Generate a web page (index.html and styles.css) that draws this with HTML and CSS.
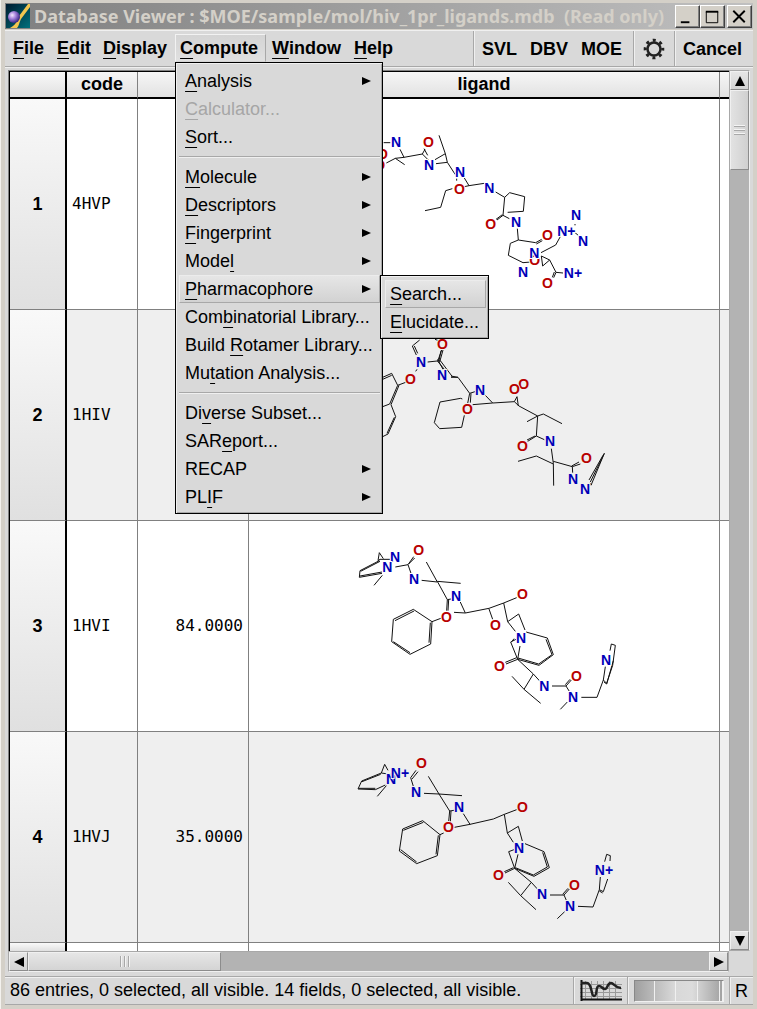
FILE: index.html
```html
<!DOCTYPE html>
<html lang="en">
<head>
<meta charset="utf-8">
<title>Database Viewer</title>
<link rel="stylesheet" href="styles.css">
</head>
<body>
<div class="window">
  <header class="titlebar">
    <svg class="logo" viewBox="0 0 24 24" aria-hidden="true">
      <defs>
        <linearGradient id="sky" x1="0" y1="0" x2="1" y2="1"><stop offset="0" stop-color="#001c30"/><stop offset="1" stop-color="#00707c"/></linearGradient>
        <radialGradient id="ball" cx=".35" cy=".35" r=".65"><stop offset="0" stop-color="#f4e8ff"/><stop offset=".45" stop-color="#a684dc"/><stop offset="1" stop-color="#3c2a88"/></radialGradient>
      </defs>
      <rect width="24" height="24" fill="url(#sky)"/>
      <path d="M4 24C10 21 11 17 13 12L22 0H24V3L15 15C13 19 13 22 11 24Z" fill="#f3c64f"/>
      <circle cx="8" cy="13" r="6" fill="url(#ball)"/>
    </svg>
    <h1 class="title">Database Viewer : $MOE/sample/mol/hiv_1pr_ligands.mdb&nbsp; (Read only)</h1>
    <div class="winbuttons">
      <button class="winbtn" aria-label="Minimize"><svg viewBox="0 0 24 22"><path d="M5 17H14" stroke-width="2"/></svg></button>
      <button class="winbtn" aria-label="Maximize"><svg viewBox="0 0 24 22"><path d="M5 6H18" stroke-width="2"/><path d="M5.500 6V17.500H17.500V6"/></svg></button>
      <button class="winbtn close" aria-label="Close"><svg viewBox="0 0 24 22"><path d="M5.500 5L17.500 17M17.500 5L5.500 17" stroke-width="2"/></svg></button>
    </div>
  </header>

  <nav class="menubar">
    <div class="menus">
      <button class="menu"><u>F</u>ile</button>
      <button class="menu"><u>E</u>dit</button>
      <button class="menu"><u>D</u>isplay</button>
      <div class="menuhost">
        <button class="menu open" aria-expanded="true"><u>C</u>ompute</button>
        <div class="dropdown">
          <button class="item sub"><span><u>A</u>nalysis</span></button>
          <button class="item" disabled><span><u>C</u>alculator...</span></button>
          <button class="item"><span><u>S</u>ort...</span></button>
          <hr class="sep">
          <button class="item sub"><span><u>M</u>olecule</span></button>
          <button class="item sub"><span><u>D</u>escriptors</span></button>
          <button class="item sub"><span><u>F</u>ingerprint</span></button>
          <button class="item sub"><span>Mode<u>l</u></span></button>
          <div class="itemhost">
            <button class="item sub active"><span><u>P</u>harmacophore</span></button>
            <div class="dropdown submenu">
              <button class="item active"><span><u>S</u>earch...</span></button>
              <button class="item"><span><u>E</u>lucidate...</span></button>
            </div>
          </div>
          <button class="item"><span>Com<u>b</u>inatorial Library...</span></button>
          <button class="item"><span>Build <u>R</u>otamer Library...</span></button>
          <button class="item"><span>Mu<u>t</u>ation Analysis...</span></button>
          <hr class="sep">
          <button class="item"><span>Di<u>v</u>erse Subset...</span></button>
          <button class="item"><span>SAR<u>e</u>port...</span></button>
          <button class="item sub"><span>RECAP</span></button>
          <button class="item sub"><span>PL<u>I</u>F</span></button>
        </div>
      </div>
      <button class="menu"><u>W</u>indow</button>
      <button class="menu"><u>H</u>elp</button>
    </div>
    <div class="tools">
      <button class="menu">SVL</button>
      <button class="menu">DBV</button>
      <button class="menu">MOE</button>
    </div>
    <div class="tools gear">
      <button class="menu" aria-label="Settings"><svg width="22" height="22" viewBox="-11 -11 22 22" fill="none" stroke="#222"><circle r="6.500" stroke-width="2.500"/><circle r="8.800" stroke-width="3" stroke-dasharray="3 3.910" stroke-dashoffset="1.500"/></svg></button>
    </div>
    <div class="tools cancel"><button class="menu">Cancel</button></div>
  </nav>

  <main class="viewer">
    <div class="gridbox">
      <table class="grid">
        <colgroup><col class="c-num"><col class="c-code"><col class="c-val"><col class="c-lig"><col class="c-end"></colgroup>
        <thead><tr><th></th><th>code</th><th></th><th>ligand</th><th></th></tr></thead>
        <tbody>
          <tr><th>1</th><td>4HVP</td><td></td><td class="mol">
            <svg viewBox="-378 -33 1410 630">
              <path d="M0 88L16 94M0 101L16 97M26 98H46M75 118L87 142L142 132L150 118M142 132L160 150M147 116L158 136M34 159L61 145L89 164M61 145L87 142M192 76L211 131L180 149M211 131L217 157L183 161M217 157L241 194M245 206V212M268 204L282 227L328 220M282 227L268 230M232 236L212 242L197 292L150 302M362 246L389 262L404 248L449 260L445 304L398 307M389 262L384 316L366 330M382 314L363 328M384 316L403 326M427 356L430 390L482 398L500 388M484 402L502 392M430 390L406 400L400 436L444 458L468 456M498 428L542 405L557 378M598 366L613 379M600 342V346M499 438L524 450L503 468L499 438M524 450L543 487L536 503M538 486L532 502M543 487L564 489"/>
              <g class="o"><text x="22" y="146">O</text><text x="14" y="181">O</text><text x="160" y="111">O</text><text x="253" y="252">O</text><text x="347" y="357">O</text><text x="517" y="390">O</text><text x="479" y="464">O</text><text x="517" y="534">O</text></g>
              <g class="n"><text x="63" y="111">N</text><text x="162" y="180">N</text><text x="255" y="200">N</text><text x="343" y="249">N</text><text x="423" y="352">N</text><text x="603" y="330">N</text><text x="574" y="377">N+</text><text x="624" y="407">N</text><text x="478" y="444">N</text><text x="444" y="501">N</text><text x="594" y="503">N+</text></g>
            </svg></td><td></td></tr>
          <tr><th>2</th><td>1HIV</td><td></td><td class="mol">
            <svg viewBox="-378 -60 1410 630">
              <path d="M134 30L112 48L124 75M118 48L128 70M180 28L196 34M200 60L188 94L208 118M204 60L194 96M198 62L192 92M158 96L196 92L232 140M188 88L204 118M228 138L249 142L284 190L278 220M288 190L286 218M228 142L249 142M284 190L300 185M122 124L126 118M92 157L68 166L50 130L23 142M50 136L23 148M68 166L44 222L23 230M72 166L48 224L62 260L39 312L23 320M58 262L36 310M331 196L353 219L293 224M353 219L418 215L432 228L488 258L456 275M488 258L505 252L561 281M418 215L426 200L430 228M262 207L257 205L195 216L178 278L194 296L260 292L268 256M488 258L484 318L458 334M480 318L456 330M484 318L508 329M529 356L535 400L536 467M429 394L484 378L535 402M535 394L592 410L616 402M590 408L612 396M592 410L593 428M648 466L688 370L646 456M642 450L684 376M644 460L650 464"/>
              <g class="o"><text x="202" y="57">O</text><text x="106" y="162">O</text><text x="277" y="252">O</text><text x="446" y="177">O</text><text x="418" y="192">O</text><text x="442" y="363">O</text><text x="634" y="399">O</text></g>
              <g class="n"><text x="138" y="112">N</text><text x="201" y="150">N</text><text x="315" y="195">N</text><text x="525" y="348">N</text><text x="594" y="462">N</text><text x="630" y="492">N</text></g>
            </svg></td><td></td></tr>
          <tr><th>3</th><td>1HVI</td><td>84.0000</td><td class="mol">
            <svg viewBox="-273 -27 1410 630">
              <path d="M150 88H120L114 92L118 68L130 86M118 92L60 122L58 142L126 130M120 94L62 124M60 138L126 126M127 136L102 166M166 111L204 104L221 80M206 102L224 84M204 104L213 130M245 151L292 156L259 96M292 154L362 160M292 154L322 209L320 242M326 209L324 242M322 209L333 207M359 212L376 249L342 247M376 249L447 235L491 219L530 203M447 237L458 268M491 219L503 275L526 304M503 275L536 252L555 300M558 306L622 324L640 374L597 406L533 388M618 328L636 374L596 402L534 384M528 328L512 336L533 388L540 348M522 326L516 334M533 388L498 402M530 383L496 397M533 388L580 432L600 454M580 432L552 478L516 439M552 478L602 520M636 468H678L694 450M676 464L690 448M678 468L688 484M682 516L661 538M724 502H771L790 450L796 410M790 450L800 460L818 406L826 346L814 342L810 362M792 456L800 462L820 392M305 264L276 275L220 238L160 268L155 335L210 373L272 342L276 275M222 243L165 272M160 335L210 368M267 338L271 278"/>
              <g class="o"><text x="236" y="75">O</text><text x="319" y="277">O</text><text x="547" y="208">O</text><text x="466" y="300">O</text><text x="478" y="424">O</text><text x="709" y="453">O</text></g>
              <g class="n"><text x="165" y="96">N</text><text x="142" y="126">N</text><text x="222" y="162">N</text><text x="348" y="213">N</text><text x="543" y="340">N</text><text x="613" y="483">N</text><text x="699" y="516">N</text><text x="798" y="405">N</text></g>
            </svg></td><td></td></tr>
          <tr><th>4</th><td>1HVJ</td><td>35.0000</td><td class="mol">
            <svg viewBox="-273 -39 1410 630">
              <path d="M152 88L124 84L134 58L144 76M124 84L65 108L54 132L106 134L136 120M122 88L66 110M56 130L106 130M139 122L112 154M212 98L228 76M216 102L234 80M212 98L220 124M252 145L297 147L265 94M297 147L366 152M297 147L329 198L326 230M333 198L331 230M329 198L342 196M370 206L390 238L343 247M390 238L460 222L493 208L530 194M493 208L502 264L520 292M502 264L535 244L547 288M555 296L612 320L628 368L582 394L524 370M608 322L622 366L580 390L526 368M522 314L506 320L524 370L534 328M524 370L495 384M520 368L493 380M524 370L574 412L594 434M574 412L542 452L505 412M542 452L588 494M630 450H672L688 432M668 448L684 430M672 450L680 468M674 500L652 521M714 484L759 486L778 434L781 396M778 434L790 440L803 402M778 438L788 444M794 350L800 328L811 332L810 348M311 264L300 269L248 227L188 252L178 318L230 356L292 332L300 269M250 232L190 256M182 314L230 351M288 328L295 271"/>
              <g class="o"><text x="244" y="69">O</text><text x="325" y="261">O</text><text x="547" y="201">O</text><text x="475" y="405">O</text><text x="703" y="435">O</text></g>
              <g class="n"><text x="153" y="117">N</text><text x="180" y="99">N+</text><text x="228" y="157">N</text><text x="357" y="201">N</text><text x="537" y="325">N</text><text x="606" y="463">N</text><text x="690" y="498">N</text><text x="792" y="390">N+</text></g>
            </svg></td><td></td></tr>
          <tr class="partial"><th></th><td></td><td></td><td></td><td></td></tr>
        </tbody>
      </table>
    </div>
    <div class="vscroll">
      <button class="arrow up" aria-label="Scroll up"></button>
      <div class="thumb"></div>
      <button class="arrow down" aria-label="Scroll down"></button>
    </div>
    <div class="hscroll">
      <button class="arrow left" aria-label="Scroll left"></button>
      <div class="thumb"></div>
      <button class="arrow right" aria-label="Scroll right"></button>
    </div>
  </main>

  <footer class="status">
    <p class="message">86 entries, 0 selected, all visible. 14 fields, 0 selected, all visible.</p>
    <button class="plot" aria-label="Plot">
      <svg width="42" height="22" viewBox="0 0 42 22" fill="none"><path d="M0 4.500H42M0 8.500H42M0 12.500H42M0 16.500H42M5.500 1V20M11.500 1V20M17.500 1V20M23.500 1V20M29.500 1V20M35.500 1V20" stroke="#999"/><path d="M1.500 0V21M1 19.500H42" stroke="#111" stroke-width="2"/><path d="M1 3H7C12 3 11 16 14 16C18 16 15 6 19 6C22 6 22 9 25 9C28 9 27 3 31 3C34 3 35 8 41 8" stroke="#222" stroke-width="2.500"/></svg>
    </button>
    <div class="wheelcell"><div class="wheel"><i></i><i></i><i></i><i></i><i></i></div></div>
    <button class="rbtn">R</button>
  </footer>
</div>
</body>
</html>
```
FILE: styles.css
```css
* { box-sizing: border-box; }
body {
  margin: 0;
  background: #d4d0c8;
  font: 18px/28px "Liberation Sans", Arial, sans-serif;
  color: #000;
}
button {
  margin: 0;
  padding: 0;
  border: 0;
  background: none;
  font: inherit;
  color: inherit;
}
u {
  text-decoration: underline;
  text-decoration-thickness: 1px;
  text-underline-offset: 4px;
  text-decoration-skip-ink: none;
}
.window {
  display: flex;
  flex-direction: column;
  min-height: 100vh;
  padding: 3px 4px 4px;
  border-left: 1px solid #f4f2ee;
  border-bottom: 1px solid #808080;
}

/* Title bar */
.titlebar {
  display: flex;
  align-items: center;
  height: 26px;
  padding: 0 1px;
  background: linear-gradient(90deg, #808080, #c0c0c0);
}
.logo { width: 24px; height: 24px; flex: none; }
.title {
  flex: 1;
  margin: 0 0 0 4px;
  font: bold 18px/26px "Noto Sans", "DejaVu Sans", sans-serif;
  color: #d4d0c8;
  white-space: nowrap;
}
.winbuttons { display: flex; }
.winbtn {
  width: 25px;
  height: 23px;
  background: #d4d0c8;
  border: 1px solid;
  border-color: #fff #404040 #404040 #fff;
  box-shadow: inset -1px -1px #808080;
}
.winbtn.close { margin-left: 2px; }
.winbtn svg { display: block; width: 100%; height: 100%; fill: none; stroke: #000; }

/* Menu bar */
.menubar {
  display: flex;
  height: 37px;
  margin-top: 1px;
  background: #d9d9d9;
  border-top: 1px solid #f0f0f0;
  border-bottom: 1px solid #a8a8a8;
  font-weight: bold;
}
.menus { display: flex; flex: 1; padding: 3px 0 2px 3px; }
.menus > .menu, .menuhost > .menu { height: 28px; padding: 0 4px; border: 1px solid transparent; line-height: 26px; }
.menus > .menu:nth-child(1) { margin-right: 3px; }
.menus > .menu:nth-child(2) { margin-right: 2px; }
.menus > .menu:nth-child(3) { margin-right: 3px; }
.menuhost { position: relative; margin-right: 1px; }
.menuhost > .menu.open {
  width: 91px;
  border-color: #f2f2f2 #a8a8a8 transparent #f2f2f2;
  background: linear-gradient(#d4d4d4, #e0e0e0);
  text-align: left;
}
.menus > .menu:last-child { margin-left: 3px; }
.tools {
  display: flex;
  align-items: center;
  gap: 13px;
  padding: 0 11px 0 8px;
  border-left: 1px solid #a8a8a8;
  box-shadow: inset 1px 0 #f0f0f0;
}
.gear { padding: 0 9px; }
.gear svg { display: block; }
.cancel { padding: 0 11px 0 8px; }

/* Menus */
.dropdown {
  position: absolute;
  z-index: 5;
  top: 28px;
  left: 0;
  width: 208px;
  padding: 4px 2px 2px 3px;
  background: #d9d9d9;
  border: 1px solid #000;
  box-shadow: inset 1px 1px #f0f0f0, inset -1px -1px #a8a8a8;
  font-weight: normal;
}
.item {
  display: flex;
  align-items: center;
  justify-content: space-between;
  width: 100%;
  height: 28px;
  padding: 0 8px 0 5px;
  border: 1px solid transparent;
  text-align: left;
  white-space: nowrap;
}
.item:disabled { color: #a6a6a6; }
.item.sub::after {
  content: "";
  border: 5px solid transparent;
  border-width: 4px 0 4px 9px;
  border-left-color: #000;
}
.item.active {
  background: linear-gradient(#e6e6e6, #d2d2d2);
  border-color: #ececec #a8a8a8 #a8a8a8 #ececec;
}
.sep {
  height: 2px;
  margin: 5px 0;
  border: 0;
  border-top: 1px solid #a8a8a8;
  border-bottom: 1px solid #f0f0f0;
}
.itemhost { position: relative; }
.submenu { top: 0; left: 201px; width: 109px; padding: 4px 2px 2px 4px; }
.submenu .item { padding: 0 4px; }

/* Grid and scroll bars */
.viewer {
  flex: 1;
  display: grid;
  grid-template-columns: minmax(0, 1fr) 21px;
  grid-template-rows: 1fr 21px;
  padding: 2px 3px 4px;
  background: #d9d9d9;
  border-top: 1px solid #f0f0f0;
}
.gridbox { background: #fff; border-top: 1px solid #808080; border-left: 1px solid #808080; overflow: hidden; }
.grid {
  width: 100%;
  table-layout: fixed;
  border-collapse: separate;
  border-spacing: 0;
  border-top: 1px solid #000;
  border-left: 1px solid #000;
}
.c-num { width: 57px; }
.c-code { width: 71px; }
.c-val { width: 111px; }
.c-end { width: 9px; }
.grid th, .grid td { height: 211px; padding: 0 5px; border-right: 1px solid #808080; border-bottom: 1px solid #808080; }
.grid th:last-child, .grid td:last-child { border-right: 0; padding: 0; }
.grid thead th { height: 27px; line-height: 25px; background: linear-gradient(#f6f6f6, #e2e2e2); border-bottom: 2px solid #000; }
.grid th:first-child { border-right: 2px solid #000; background: linear-gradient(#f9f9f9, #e0e0e0); }
.grid td { font-family: "DejaVu Sans Mono", monospace; font-size: 16px; }
.grid td:nth-child(3) { text-align: right; }
.grid tbody tr:nth-child(even) td { background: #efefef; }
.grid tr.partial th, .grid tr.partial td { height: 8px; border-bottom: 0; }
.grid td.mol { padding: 0; }
.mol svg { display: block; width: 470px; height: 210px; margin: 0 auto; }
.mol path { fill: none; stroke: #111; stroke-width: 3; }
.mol text { font: bold 42px "Liberation Sans", Arial, sans-serif; text-anchor: middle; stroke: #fff; stroke-width: 6; paint-order: stroke; }
tr:nth-child(even) .mol text { stroke: #efefef; }
.mol .o { fill: #b80000; }
.mol .n { fill: #0000b8; }

.vscroll, .hscroll { display: flex; background: #b3b3b3; }
.vscroll { flex-direction: column; border: 1px solid #a8a8a8; border-right-color: #f0f0f0; }
.hscroll { border: 1px solid #a8a8a8; border-bottom-color: #f0f0f0; }
.arrow, .thumb {
  background: linear-gradient(#e6e6e6, #d4d4d4);
  border: 1px solid;
  border-color: #f0f0f0 #8c8c8c #8c8c8c #f0f0f0;
}
.arrow { display: grid; place-items: center; width: 19px; height: 19px; flex: none; }
.arrow::after { content: ""; border: 5px solid transparent; }
.up::after { border-width: 0 5px 10px; border-bottom-color: #000; }
.down::after { border-width: 10px 5px 0; border-top-color: #000; }
.left::after { border-width: 5px 10px 5px 0; border-right-color: #000; }
.right::after { border-width: 5px 0 5px 10px; border-left-color: #000; }
.thumb { display: grid; place-items: center; }
.vscroll .thumb { height: 80px; background: linear-gradient(90deg, #e2e2e2, #d0d0d0); }
.hscroll .thumb { width: 193px; }
.thumb::after {
  content: "";
  background: repeating-linear-gradient(90deg, #a8a8a8 0 1px, #f4f4f4 1px 2px, transparent 2px 4px);
  width: 10px;
  height: 11px;
}
.vscroll .thumb::after {
  width: 11px;
  height: 10px;
  background: repeating-linear-gradient(#f4f4f4 0 1px, #a8a8a8 1px 2px, transparent 2px 4px);
}
.down, .right { margin-top: auto; }
.right { margin: 0 0 0 auto; }

/* Status bar */
.status { display: flex; height: 29px; background: #d9d9d9; border-top: 1px solid #a8a8a8; border-bottom: 1px solid #a8a8a8; }
.message { flex: 1; margin: 0; padding-left: 5px; line-height: 27px; box-shadow: inset 0 1px #f0f0f0; }
.plot, .wheelcell, .rbtn { border-left: 1px solid #a8a8a8; box-shadow: inset 1px 1px #f0f0f0; display: grid; place-items: center; }
.plot { width: 54px; }
.wheelcell { width: 102px; }
.wheel {
  display: grid;
  grid-template-columns: 20px 21px 22px 1fr 3px;
  width: 90px;
  height: 22px;
  border: 1px solid #a0a0a0;
  border-color: #888 #f0f0f0 #f0f0f0 #888;
  background: linear-gradient(90deg, #a0a0a0, #d8d8d8 45%, #dcdcdc 65%, #a0a0a0);
}
.wheel i { border-right: 1px solid #f0f0f0; }
.rbtn { width: 24px; }
```
